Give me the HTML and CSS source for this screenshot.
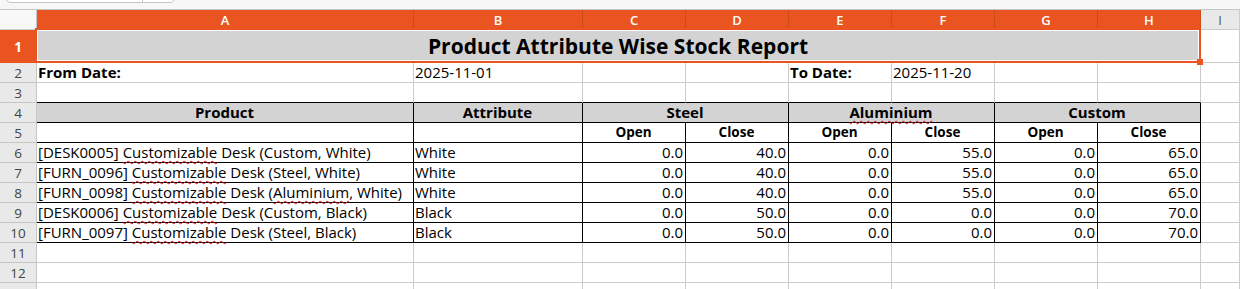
FILE: index.html
```html
<!DOCTYPE html>
<html lang="en">
<head>
    <meta charset="UTF-8">
    <title>Product Attribute Wise Stock Report</title>
    <link rel="stylesheet" href="styles.css">
</head>
<body>
    <div class="top-edge">
        <div class="name-box"><span class="name-sep"></span></div>
    </div>
    <div class="sheet">
        <!-- column headers -->
        <div class="corner"></div>
        <div class="col-head sel">A</div>
        <div class="col-head sel">B</div>
        <div class="col-head sel">C</div>
        <div class="col-head sel">D</div>
        <div class="col-head sel">E</div>
        <div class="col-head sel">F</div>
        <div class="col-head sel">G</div>
        <div class="col-head sel">H</div>
        <div class="col-head">I</div>

        <!-- row 1 -->
        <div class="row-head sel">1</div>
        <div class="cell title">Product Attribute Wise Stock Report</div>
        <div class="cell"></div>

        <!-- row 2 -->
        <div class="row-head">2</div>
        <div class="cell bold">From Date:</div>
        <div class="cell">2025-11-01</div>
        <div class="cell"></div>
        <div class="cell"></div>
        <div class="cell bold">To Date:</div>
        <div class="cell">2025-11-20</div>
        <div class="cell"></div>
        <div class="cell"></div>
        <div class="cell"></div>

        <!-- row 3 -->
        <div class="row-head">3</div>
        <div class="cell box-top"></div>
        <div class="cell box-top"></div>
        <div class="cell box-top"></div>
        <div class="cell box-top"></div>
        <div class="cell box-top"></div>
        <div class="cell box-top"></div>
        <div class="cell box-top"></div>
        <div class="cell box-top"></div>
        <div class="cell"></div>

        <!-- row 4 -->
        <div class="row-head">4</div>
        <div class="cell box head">Product</div>
        <div class="cell box head">Attribute</div>
        <div class="cell box head span2">Steel</div>
        <div class="cell box head span2"><span class="typo">Aluminium</span></div>
        <div class="cell box head span2">Custom</div>
        <div class="cell"></div>

        <!-- row 5 -->
        <div class="row-head">5</div>
        <div class="cell box"></div>
        <div class="cell box"></div>
        <div class="cell box sub">Open</div>
        <div class="cell box sub">Close</div>
        <div class="cell box sub">Open</div>
        <div class="cell box sub">Close</div>
        <div class="cell box sub">Open</div>
        <div class="cell box sub">Close</div>
        <div class="cell"></div>

        <!-- rows 6-10 -->
        <div class="row-head">6</div>
        <div class="cell box">[DESK0005]&nbsp;<span class="typo">Customizable</span>&nbsp;Desk (Custom, White)</div>
        <div class="cell box">White</div>
        <div class="cell box num">0.0</div>
        <div class="cell box num">40.0</div>
        <div class="cell box num">0.0</div>
        <div class="cell box num">55.0</div>
        <div class="cell box num">0.0</div>
        <div class="cell box num">65.0</div>
        <div class="cell"></div>

        <div class="row-head">7</div>
        <div class="cell box">[FURN_0096]&nbsp;<span class="typo">Customizable</span>&nbsp;Desk (Steel, White)</div>
        <div class="cell box">White</div>
        <div class="cell box num">0.0</div>
        <div class="cell box num">40.0</div>
        <div class="cell box num">0.0</div>
        <div class="cell box num">55.0</div>
        <div class="cell box num">0.0</div>
        <div class="cell box num">65.0</div>
        <div class="cell"></div>

        <div class="row-head">8</div>
        <div class="cell box">[FURN_0098]&nbsp;<span class="typo">Customizable</span>&nbsp;Desk (<span class="typo">Aluminium</span>, White)</div>
        <div class="cell box">White</div>
        <div class="cell box num">0.0</div>
        <div class="cell box num">40.0</div>
        <div class="cell box num">0.0</div>
        <div class="cell box num">55.0</div>
        <div class="cell box num">0.0</div>
        <div class="cell box num">65.0</div>
        <div class="cell"></div>

        <div class="row-head">9</div>
        <div class="cell box">[DESK0006]&nbsp;<span class="typo">Customizable</span>&nbsp;Desk (Custom, Black)</div>
        <div class="cell box">Black</div>
        <div class="cell box num">0.0</div>
        <div class="cell box num">50.0</div>
        <div class="cell box num">0.0</div>
        <div class="cell box num">0.0</div>
        <div class="cell box num">0.0</div>
        <div class="cell box num">70.0</div>
        <div class="cell"></div>

        <div class="row-head">10</div>
        <div class="cell box">[FURN_0097]&nbsp;<span class="typo">Customizable</span>&nbsp;Desk (Steel, Black)</div>
        <div class="cell box">Black</div>
        <div class="cell box num">0.0</div>
        <div class="cell box num">50.0</div>
        <div class="cell box num">0.0</div>
        <div class="cell box num">0.0</div>
        <div class="cell box num">0.0</div>
        <div class="cell box num">70.0</div>
        <div class="cell"></div>

        <!-- empty rows -->
        <div class="row-head">11</div>
        <div class="cell"></div><div class="cell"></div><div class="cell"></div>
        <div class="cell"></div><div class="cell"></div><div class="cell"></div>
        <div class="cell"></div><div class="cell"></div><div class="cell"></div>

        <div class="row-head">12</div>
        <div class="cell"></div><div class="cell"></div><div class="cell"></div>
        <div class="cell"></div><div class="cell"></div><div class="cell"></div>
        <div class="cell"></div><div class="cell"></div><div class="cell"></div>

        <div class="row-head">13</div>
        <div class="cell"></div><div class="cell"></div><div class="cell"></div>
        <div class="cell"></div><div class="cell"></div><div class="cell"></div>
        <div class="cell"></div><div class="cell"></div><div class="cell"></div>
    </div>
</body>
</html>
```

FILE: styles.css
```css
body {
    margin: 0;
    background: #ffffff;
    font-family: 'Open Sans', 'Noto Sans', sans-serif;
    color: #000;
    overflow: hidden;
}
.top-edge {
    height: 9px;
    background: #f7f7f7;
    position: relative;
    overflow: hidden;
}
.name-box {
    position: absolute;
    left: 5px;
    top: -20px;
    width: 169px;
    height: 21px;
    background: #ffffff;
    border: 1px solid #c6c6c6;
    border-radius: 6px;
}
.name-sep {
    position: absolute;
    left: 136px;
    top: 0;
    bottom: 0;
    border-left: 1px solid #c6c6c6;
}
.sheet {
    display: grid;
    grid-template-columns: 37px 377px 169px repeat(6, 103px) 1fr;
    grid-template-rows: 20px 33px repeat(12, 20px);
    border-top: 1px solid #c6c6c6;
}
.sheet > div {
    box-sizing: border-box;
    border-right: 1px solid #cccccc;
    border-bottom: 1px solid #cccccc;
    white-space: nowrap;
    overflow: visible;
}
.corner {
    background: #f8f8f8;
    border-right-color: #c6c6c6 !important;
}
.col-head {
    background: #e9e9e9;
    color: #555;
    font-size: 13px;
    display: flex;
    align-items: center;
    justify-content: center;
}
.col-head.sel {
    background: #e95420;
    color: #fff;
    font-weight: 600;
    border-right-color: #cf4a1b !important;
    border-bottom-color: #e95420 !important;
}
.row-head {
    background: #e9e9e9;
    color: #444;
    font-size: 13.5px;
    display: flex;
    align-items: center;
    justify-content: center;
    padding-top: 1px;
    border-right-color: #c6c6c6 !important;
    border-bottom-color: #c6c6c6 !important;
}
.row-head.sel {
    background: #e95420;
    color: #fff;
    font-weight: 700;
    border-bottom-color: #e95420 !important;
}
.cell {
    font-size: 15px;
    line-height: 19px;
    padding: 0 2px 0 1px;
    display: flex;
    align-items: flex-end;
}
.title {
    grid-column: span 8;
    position: relative;
    background: #d3d3d3;
    justify-content: center;
    align-items: center;
    font-size: 21px;
    font-weight: 700;
    padding-top: 1px;
}
/* cell cursor around the merged title */
.title::after {
    content: "";
    position: absolute;
    top: -2px;
    left: -2px;
    right: -1px;
    bottom: -1px;
    border: 2px solid #e95420;
    box-shadow: inset 0 0 0 1px #ffffff;
    pointer-events: none;
}
.title::before {
    content: "";
    position: absolute;
    right: -3px;
    bottom: -3px;
    width: 6px;
    height: 6px;
    background: #e95420;
    z-index: 2;
}
.bold {
    font-weight: 700;
}
.box {
    border-right-color: #000 !important;
    border-bottom-color: #000 !important;
}
.box-top {
    border-bottom-color: #000 !important;
}
.head {
    background: #d3d3d3;
    font-weight: 700;
    justify-content: center;
}
.span2 {
    grid-column: span 2;
}
.sub {
    font-weight: 700;
    font-size: 13.5px;
    justify-content: center;
}
.num {
    justify-content: flex-end;
}
.typo {
    text-decoration: underline wavy #e01b24;
    text-decoration-thickness: 1px;
    text-underline-offset: 2px;
}
```
